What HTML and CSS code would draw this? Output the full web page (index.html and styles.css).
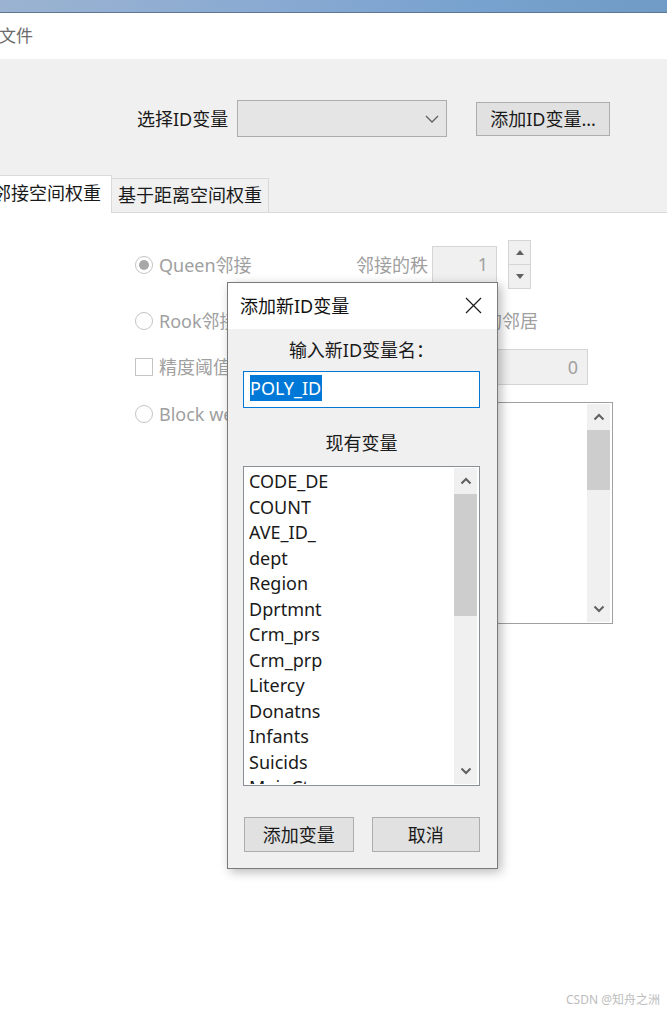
FILE: index.html
```html
<!DOCTYPE html>
<html lang="zh-CN">
<head>
<meta charset="utf-8">
<title>添加新ID变量</title>
<link rel="stylesheet" href="styles.css">
</head>
<body>
<div class="screen">
  <div class="titlebar"></div>
  <div class="menubar"><span class="menu-item">文件</span></div>
  <div class="toolbar">
    <div class="id-row">
      <span class="id-label">选择ID变量</span>
      <div class="combo">
        <svg class="combo-arrow" width="14" height="8" viewBox="0 0 14 8"><polyline points="1,1 7,7 13,1" fill="none" stroke="#606060" stroke-width="1.3"/></svg>
      </div>
      <div class="btn btn-add-id">添加ID变量...</div>
    </div>
    <div class="tabs">
      <div class="tab tab-active">邻接空间权重</div>
      <div class="tab">基于距离空间权重</div>
      <div class="tab-fill"></div>
    </div>
  </div>
  <div class="panel">
    <div class="row row1">
      <div class="opt opt-w1"><span class="radio radio-on"></span><span>Queen邻接</span></div>
      <span class="order-label">邻接的秩</span>
      <div class="field spin-field">1</div>
      <div class="spin">
        <div class="spin-btn"><svg width="8" height="5" viewBox="0 0 8 5"><polygon points="0,5 4,0 8,5" fill="#606060"/></svg></div>
        <div class="spin-btn"><svg width="8" height="5" viewBox="0 0 8 5"><polygon points="0,0 4,5 8,0" fill="#606060"/></svg></div>
      </div>
    </div>
    <div class="row row2">
      <div class="opt opt-w1"><span class="radio"></span><span>Rook邻接</span></div>
      <div class="opt lower"><span class="check"></span><span>包含更低阶的邻居</span></div>
    </div>
    <div class="row row3">
      <div class="opt opt-w2"><span class="check"></span><span>精度阈值</span></div>
      <div class="field thresh-field">0</div>
    </div>
    <div class="row row4">
      <div class="opt opt-w2"><span class="radio"></span><span>Block weights</span></div>
      <div class="listbox bg-list">
        <div class="list-items"></div>
        <div class="vscroll">
          <div class="vs-arrow"><svg width="12" height="8" viewBox="0 0 12 8"><polyline points="1.5,6.5 6,2 10.5,6.5" fill="none" stroke="#606060" stroke-width="2"/></svg></div>
          <div class="vs-track"><div class="vs-thumb bg-thumb"></div></div>
          <div class="vs-arrow"><svg width="12" height="8" viewBox="0 0 12 8"><polyline points="1.5,1.5 6,6 10.5,1.5" fill="none" stroke="#606060" stroke-width="2"/></svg></div>
        </div>
      </div>
    </div>
  </div>

  <div class="dialog">
    <div class="dlg-title">
      <span>添加新ID变量</span>
      <svg class="dlg-close" width="17" height="17" viewBox="0 0 17 17"><path d="M1 1 L16 16 M16 1 L1 16" stroke="#1a1a1a" stroke-width="1.2" fill="none"/></svg>
    </div>
    <div class="dlg-body">
      <div class="dlg-label">输入新ID变量名：</div>
      <div class="dlg-input"><span class="sel">POLY_ID</span></div>
      <div class="dlg-label dlg-label2">现有变量</div>
      <div class="listbox dlg-list">
        <div class="list-items">
          <div class="item">CODE_DE</div>
          <div class="item">COUNT</div>
          <div class="item">AVE_ID_</div>
          <div class="item">dept</div>
          <div class="item">Region</div>
          <div class="item">Dprtmnt</div>
          <div class="item">Crm_prs</div>
          <div class="item">Crm_prp</div>
          <div class="item">Litercy</div>
          <div class="item">Donatns</div>
          <div class="item">Infants</div>
          <div class="item">Suicids</div>
          <div class="item">MainCty</div>
        </div>
        <div class="vscroll dlg-scroll">
          <div class="vs-arrow"><svg width="12" height="8" viewBox="0 0 12 8"><polyline points="1.5,6.5 6,2 10.5,6.5" fill="none" stroke="#606060" stroke-width="2"/></svg></div>
          <div class="vs-track"><div class="vs-thumb dlg-thumb"></div></div>
          <div class="vs-arrow"><svg width="12" height="8" viewBox="0 0 12 8"><polyline points="1.5,1.5 6,6 10.5,1.5" fill="none" stroke="#606060" stroke-width="2"/></svg></div>
        </div>
      </div>
      <div class="dlg-buttons">
        <div class="btn dlg-btn">添加变量</div>
        <div class="btn dlg-btn dlg-btn2">取消</div>
      </div>
    </div>
  </div>

  <div class="watermark">CSDN @知舟之洲</div>
</div>
</body>
</html>
```

FILE: styles.css
```css
* { box-sizing: border-box; }
html, body { margin: 0; padding: 0; }
body {
  font-family: "Noto Sans", "Noto Sans CJK SC", sans-serif;
  font-size: 18px;
  color: #1a1a1a;
  background: #fff;
}
.screen {
  position: relative;
  width: 667px;
  height: 1015px;
  overflow: hidden;
  background: #fff;
}
.titlebar {
  height: 13px;
  background: linear-gradient(to right, #9bb3d1 0%, #8aaad2 40%, #78a2cf 70%, #6f9bc6 100%);
  border-bottom: 1px solid #5e7792;
}
.menubar {
  height: 46px;
  background: #fff;
  display: flex;
  align-items: center;
}
.menu-item {
  font-size: 17px;
  line-height: 24px;
  color: #6b6b6b;
  margin-left: -1px;
}
.toolbar {
  background: #f0f0f0;
  height: 154px;
  padding-top: 41px;
  display: flex;
  flex-direction: column;
}
.id-row {
  display: flex;
  align-items: center;
  height: 37px;
  padding-left: 137px;
}
.id-label { line-height: 24px; width: 100px; }
.combo {
  width: 210px;
  height: 37px;
  background: #e5e5e5;
  border: 1px solid #adadad;
  display: flex;
  align-items: center;
  justify-content: flex-end;
  padding-right: 7px;
}
.btn {
  background: #e1e1e1;
  border: 1px solid #adadad;
  display: flex;
  align-items: center;
  justify-content: center;
  line-height: 24px;
}
.btn-add-id {
  width: 134px;
  height: 34px;
  margin-left: 29px;
}
.tabs {
  margin-top: 38px;
  display: flex;
  align-items: flex-end;
  height: 38px;
}
.tab {
  height: 35px;
  line-height: 33px;
  padding: 0 6px;
  background: #f0f0f0;
  border: 1px solid #d9d9d9;
  border-left: none;
}
.tab-active {
  height: 38px;
  line-height: 34px;
  margin-left: -18px;
  padding: 0 10px 0 11px;
  background: #fff;
  border-bottom: none;
}
.tab-fill {
  flex: 1;
  height: 1px;
  background: #d9d9d9;
}
.panel {
  background: #fff;
  padding-top: 27px;
  padding-left: 135px;
  color: #a0a0a0;
}
.row {
  display: flex;
  align-items: center;
}
.row1 { height: 49px; }
.row2 { height: 24px; margin-top: 20px; }
.row3 { height: 36px; margin-top: 16px; }
.row4 { align-items: flex-start; margin-top: 17px; }
.opt {
  display: flex;
  align-items: center;
  line-height: 24px;
  height: 24px;
  white-space: nowrap;
}
.opt-w1 { width: 221px; }
.opt-w2 { width: 297px; }
.radio {
  width: 18px;
  height: 18px;
  border: 1px solid #c4c4c4;
  border-radius: 50%;
  background: #fff;
  margin-right: 6px;
  display: flex;
  align-items: center;
  justify-content: center;
}
.radio-on::after {
  content: "";
  width: 10px;
  height: 10px;
  border-radius: 50%;
  background: #a8a8a8;
}
.check {
  width: 18px;
  height: 18px;
  border: 1px solid #c4c4c4;
  background: #fff;
  margin-right: 6px;
}
.order-label { width: 76px; line-height: 24px; }
.field {
  background: #f0f0f0;
  border: 1px solid #d5d5d5;
  text-align: right;
  line-height: 34px;
  padding-right: 8px;
}
.spin-field { width: 65px; height: 37px; }
.spin {
  margin-left: 11px;
  width: 23px;
  height: 49px;
  display: flex;
  flex-direction: column;
  border: 1px solid #d5d5d5;
  background: #f0f0f0;
}
.spin-btn {
  flex: 1;
  display: flex;
  align-items: center;
  justify-content: center;
}
.spin-btn + .spin-btn { border-top: 1px solid #d5d5d5; }
.lower { margin-left: 14px; }
.thresh-field { width: 156px; height: 36px; padding-right: 9px; }
.listbox {
  display: flex;
  background: #fff;
  border: 1px solid #a0a0a0;
}
.bg-list {
  width: 181px;
  height: 222px;
  padding: 1px 2px 1px 1px;
}
.list-items {
  flex: 1;
  overflow: hidden;
  color: #1a1a1a;
}
.vscroll {
  width: 23px;
  background: #f0f0f0;
  display: flex;
  flex-direction: column;
}
.vs-arrow {
  height: 26px;
  display: flex;
  align-items: center;
  justify-content: center;
}
.vs-track { flex: 1; }
.vs-thumb { background: #cdcdcd; }
.bg-thumb { height: 60px; }

.dialog {
  position: absolute;
  left: 227px;
  top: 282px;
  width: 271px;
  height: 587px;
  border: 1px solid #7a7a7a;
  background: #f0f0f0;
  box-shadow: 3px 3px 10px rgba(0,0,0,0.28);
  display: flex;
  flex-direction: column;
}
.dlg-title {
  height: 46px;
  background: #fff;
  display: flex;
  align-items: center;
  justify-content: space-between;
  padding: 0 15px 1px 12px;
  line-height: 24px;
  color: #111;
}
.dlg-body {
  padding: 9px 17px 0 15px;
  display: flex;
  flex-direction: column;
}
.dlg-label {
  text-align: center;
  line-height: 24px;
  color: #1a1a1a;
}
.dlg-input {
  margin-top: 9px;
  height: 37px;
  background: #fff;
  border: 1px solid #0078d7;
  padding: 3px 0 0 6px;
  display: flex;
  align-items: flex-start;
}
.sel {
  background: #0078d7;
  color: #fff;
  line-height: 26px;
  padding-right: 1px;
}
.dlg-label2 { margin-top: 23px; }
.dlg-list {
  margin-top: 11px;
  height: 320px;
  border-color: #8a8f96;
  padding: 1px 2px 1px 0;
}
.dlg-list .list-items { padding: 1px 0 0 5px; }
.item { line-height: 25.5px; height: 25.5px; white-space: nowrap; }
.dlg-thumb { height: 122px; }
.dlg-buttons {
  margin-top: 31px;
  display: flex;
  gap: 18px;
  padding-left: 1px;
}
.dlg-btn { width: 110px; height: 35px; }
.dlg-btn2 { width: 109px; }

.watermark {
  position: absolute;
  right: 7px;
  bottom: 7px;
  font-size: 12px;
  line-height: 16px;
  color: #bdbdbd;
}
```
